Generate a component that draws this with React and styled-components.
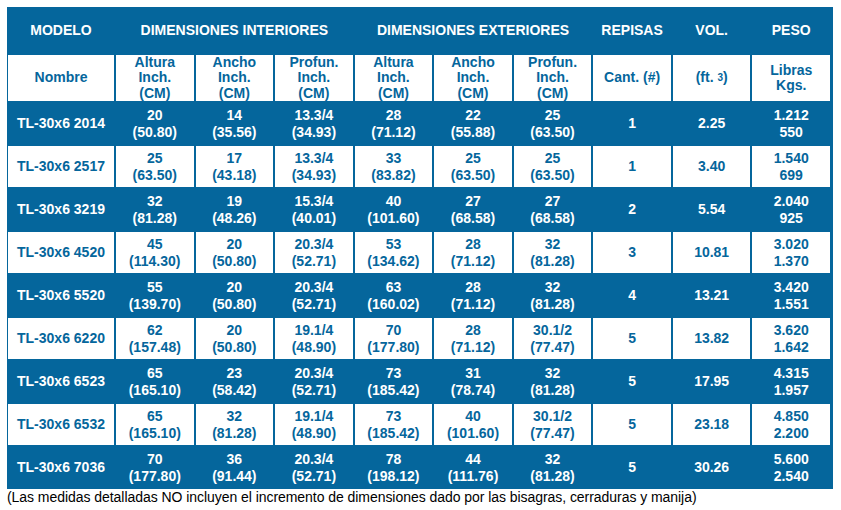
import React from 'react';
import styled, { createGlobalStyle } from 'styled-components';

const BLUE = '#05669c';

const GlobalStyle = createGlobalStyle`
  body {
    margin: 0;
    background: #ffffff;
    font-family: 'Liberation Sans', Arial, sans-serif;
  }
`;

const Page = styled.div`
  padding: 7px 0 0 7px;
  width: 826px;
`;

const Table = styled.div`
  display: grid;
  grid-template-columns: 106px repeat(9, 1fr);
  grid-template-rows: 46px 46px repeat(9, 41px);
  column-gap: 2px;
  row-gap: 2px;
  background: ${BLUE};
  padding: 0 3px 1px 1px;
`;

const TopHead = styled.div`
  grid-column: span ${(p) => p.span || 1};
  display: flex;
  align-items: center;
  justify-content: center;
  color: #ffffff;
  font-weight: bold;
  font-size: 14px;
  margin-top: -1px;
`;

const SubHead = styled.div`
  background: #ffffff;
  color: ${BLUE};
  font-weight: bold;
  font-size: 14px;
  line-height: 15.5px;
  display: flex;
  align-items: center;
  justify-content: center;
  text-align: center;
  sup {
    font-size: 10px;
    line-height: 0;
    vertical-align: 5px;
  }
`;

const Cell = styled.div`
  background: ${(p) => (p.light ? '#ffffff' : BLUE)};
  color: ${(p) => (p.light ? BLUE : '#ffffff')};
  font-weight: bold;
  font-size: 14px;
  line-height: 17px;
  display: flex;
  align-items: center;
  justify-content: center;
  text-align: center;
  white-space: pre-line;
`;

const Note = styled.div`
  font-size: 14px;
  color: #000000;
  margin-top: 0;
  letter-spacing: -0.05px;
`;

const rows = [
  ['TL-30x6 2014', '20\n(50.80)', '14\n(35.56)', '13.3/4\n(34.93)', '28\n(71.12)', '22\n(55.88)', '25\n(63.50)', '1', '2.25', '1.212\n550'],
  ['TL-30x6 2517', '25\n(63.50)', '17\n(43.18)', '13.3/4\n(34.93)', '33\n(83.82)', '25\n(63.50)', '25\n(63.50)', '1', '3.40', '1.540\n699'],
  ['TL-30x6 3219', '32\n(81.28)', '19\n(48.26)', '15.3/4\n(40.01)', '40\n(101.60)', '27\n(68.58)', '27\n(68.58)', '2', '5.54', '2.040\n925'],
  ['TL-30x6 4520', '45\n(114.30)', '20\n(50.80)', '20.3/4\n(52.71)', '53\n(134.62)', '28\n(71.12)', '32\n(81.28)', '3', '10.81', '3.020\n1.370'],
  ['TL-30x6 5520', '55\n(139.70)', '20\n(50.80)', '20.3/4\n(52.71)', '63\n(160.02)', '28\n(71.12)', '32\n(81.28)', '4', '13.21', '3.420\n1.551'],
  ['TL-30x6 6220', '62\n(157.48)', '20\n(50.80)', '19.1/4\n(48.90)', '70\n(177.80)', '28\n(71.12)', '30.1/2\n(77.47)', '5', '13.82', '3.620\n1.642'],
  ['TL-30x6 6523', '65\n(165.10)', '23\n(58.42)', '20.3/4\n(52.71)', '73\n(185.42)', '31\n(78.74)', '32\n(81.28)', '5', '17.95', '4.315\n1.957'],
  ['TL-30x6 6532', '65\n(165.10)', '32\n(81.28)', '19.1/4\n(48.90)', '73\n(185.42)', '40\n(101.60)', '30.1/2\n(77.47)', '5', '23.18', '4.850\n2.200'],
  ['TL-30x6 7036', '70\n(177.80)', '36\n(91.44)', '20.3/4\n(52.71)', '78\n(198.12)', '44\n(111.76)', '32\n(81.28)', '5', '30.26', '5.600\n2.540'],
];

const dimHead = ['Altura', 'Ancho', 'Profun.'];

export default function App() {
  return (
    <>
      <GlobalStyle />
      <Page>
        <Table>
          <TopHead>MODELO</TopHead>
          <TopHead span={3}>DIMENSIONES INTERIORES</TopHead>
          <TopHead span={3}>DIMENSIONES EXTERIORES</TopHead>
          <TopHead>REPISAS</TopHead>
          <TopHead>VOL.</TopHead>
          <TopHead>PESO</TopHead>

          <SubHead>Nombre</SubHead>
          {[...dimHead, ...dimHead].map((h, i) => (
            <SubHead key={i}>
              {h}
              <br />
              Inch.
              <br />
              (CM)
            </SubHead>
          ))}
          <SubHead>Cant. (#)</SubHead>
          <SubHead>
            (ft.&nbsp;<sup>3</sup>)
          </SubHead>
          <SubHead>
            Libras
            <br />
            Kgs.
          </SubHead>

          {rows.map((row, r) =>
            row.map((v, c) => (
              <Cell key={`${r}-${c}`} light={r % 2 === 1}>
                {v}
              </Cell>
            ))
          )}
        </Table>
        <Note>
          (Las medidas detalladas NO incluyen el incremento de dimensiones dado por las bisagras, cerraduras y manija)
        </Note>
      </Page>
    </>
  );
}
